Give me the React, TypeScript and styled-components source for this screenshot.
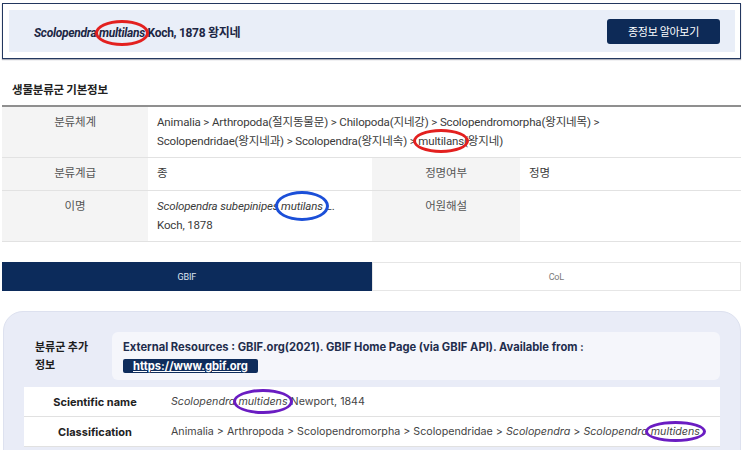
import React from 'react';
import styled, { createGlobalStyle } from 'styled-components';

// Base page styles: no body margin, a sans font stack with Korean fallback.
const GlobalStyle = createGlobalStyle`
  html, body {
    margin: 0;
    padding: 0;
    background: #ffffff;
  }
  body {
    font-family: Roboto, "Noto Sans CJK KR", "Noto Sans", sans-serif;
    color: #333;
  }
  * { box-sizing: border-box; }
`;

const Page = styled.div`
  width: 743px;
  padding: 3px 2px 0 2px;
`;

// Hand-drawn looking ring placed over a word (annotation layer).
const Marked = styled.span<{ $ring: string; $padX: number; $padY: number; $width?: number }>`
  position: relative;
  &::after {
    content: '';
    position: absolute;
    left: -${(p) => p.$padX}px;
    right: -${(p) => p.$padX}px;
    top: -${(p) => p.$padY}px;
    bottom: -${(p) => p.$padY}px;
    border: ${(p) => p.$width ?? 3}px solid ${(p) => p.$ring};
    border-radius: 50%;
    pointer-events: none;
  }
`;

/* ---------- species banner ---------- */

const BannerFrame = styled.div`
  border: 1.5px solid #23375f;
  padding: 6px 5px 6px 6px;
  box-shadow: 0 1px 1px rgba(20, 30, 60, 0.35);
`;

const BannerInner = styled.div`
  height: 42px;
  background: #e9eef8;
  display: flex;
  align-items: center;
  justify-content: space-between;
  padding: 0 15px 0 25px;
`;

const BannerTitle = styled.div`
  font-size: 12px;
  font-weight: 700;
  color: #1c2644;
  letter-spacing: -0.3px;

  em {
    font-style: italic;
  }
`;

const DetailButton = styled.button`
  width: 113px;
  height: 25px;
  border: none;
  border-radius: 3px;
  background: #0d2a57;
  color: #fff;
  font-family: "Noto Sans CJK KR", sans-serif;
  font-size: 11px;
  letter-spacing: -0.3px;
  cursor: pointer;
`;

/* ---------- basic taxonomy table ---------- */

const SectionTitle = styled.h3`
  margin: 22px 0 0 10px;
  height: 26px;
  font-family: "Noto Sans CJK KR", sans-serif;
  font-size: 11.5px;
  font-weight: 700;
  color: #222;
  letter-spacing: -0.2px;
`;

const InfoTable = styled.div`
  display: grid;
  grid-template-columns: 146px 224px 148px 1fr;
  border-top: 2px solid #8f8f8f;
  margin-top: -2px;
`;

const Cell = styled.div<{ $label?: boolean; $span?: number }>`
  grid-column: span ${(p) => p.$span ?? 1};
  padding: 6px 9px 6px;
  line-height: 19px;
  font-size: 11.5px;
  border-bottom: 1px solid #e2e2e2;
  background: ${(p) => (p.$label ? '#f4f4f4' : '#fff')};
  color: ${(p) => (p.$label ? '#555' : '#3a3a3a')};
  text-align: ${(p) => (p.$label ? 'center' : 'left')};
  letter-spacing: -0.15px;
  min-height: 51px;

  &.short {
    min-height: 33px;
  }

  em {
    font-style: italic;
  }
`;

/* ---------- source tabs ---------- */

const Tabs = styled.div`
  display: flex;
  margin-top: 20px;
`;

const Tab = styled.div<{ $active?: boolean }>`
  flex: 1;
  height: 29px;
  display: flex;
  align-items: center;
  justify-content: center;
  font-size: 9px;
  letter-spacing: -0.2px;
  background: ${(p) => (p.$active ? '#0c2b5b' : '#fff')};
  color: ${(p) => (p.$active ? '#dfe6f2' : '#7a7a7a')};
  border: 1px solid ${(p) => (p.$active ? '#0c2b5b' : '#e6e6e6')};
`;

/* ---------- GBIF extra panel ---------- */

const ExtraPanel = styled.div`
  margin-top: 20px;
  margin-left: 1px;
  background: #e9ecf7;
  border: 1px solid #dde1ef;
  border-radius: 20px 20px 0 0;
  padding: 20px 20px 0 20px;
  height: 140px;
  font-family: Inter, "Noto Sans CJK KR", sans-serif;
`;

const ExtraHead = styled.div`
  display: flex;
  align-items: stretch;
`;

const ExtraLabel = styled.div`
  width: 88px;
  padding: 5px 0 0 11px;
  font-size: 11px;
  font-weight: 700;
  line-height: 18px;
  color: #1d1d1d;
  font-family: "Noto Sans CJK KR", sans-serif;
`;

const ExtraBox = styled.div`
  flex: 1;
  background: #f5f6fb;
  border-radius: 6px;
  padding: 8px 11px 7px;
  height: 48px;
`;

const ResourceText = styled.div`
  font-size: 11.2px;
  font-weight: 700;
  color: #1f2d4d;
  line-height: 14px;
`;

const LinkPill = styled.a`
  display: inline-block;
  margin-top: 4px;
  padding: 0 10px;
  height: 14px;
  line-height: 14px;
  border-radius: 2px;
  background: #0f2d5c;
  color: #fff;
  font-size: 11.2px;
  font-weight: 700;
  text-decoration: underline;
`;

const GbifTable = styled.div`
  margin-top: 7px;
  background: #fff;
  display: grid;
  grid-template-columns: 142px 1fr;
`;

const GbifLabel = styled.div`
  height: 30px;
  display: flex;
  align-items: center;
  justify-content: center;
  font-size: 11px;
  font-weight: 700;
  color: #222;
  border-bottom: 1px solid #e1e1e1;
`;

const GbifValue = styled.div`
  height: 30px;
  display: flex;
  align-items: center;
  padding-left: 5px;
  font-size: 10.7px;
  color: #444;
  white-space: nowrap;
  border-bottom: 1px solid #e1e1e1;

  em {
    font-style: italic;
  }
`;

const App: React.FC = () => {
  return (
    <>
      <GlobalStyle />
      <Page>
        <BannerFrame>
          <BannerInner>
            <BannerTitle>
              <em>Scolopendra </em>
              <em>
                <Marked $ring="#e3201f" $padX={4} $padY={6}>multilans</Marked>
              </em>{' '}
              Koch, 1878 왕지네
            </BannerTitle>
            <DetailButton>종정보 알아보기</DetailButton>
          </BannerInner>
        </BannerFrame>

        <SectionTitle>생물분류군 기본정보</SectionTitle>
        <InfoTable>
          <Cell $label>분류체계</Cell>
          <Cell $span={3}>
            Animalia &gt; Arthropoda(절지동물문) &gt; Chilopoda(지네강) &gt; Scolopendromorpha(왕지네목) &gt;
            <br />
            Scolopendridae(왕지네과) &gt; Scolopendra(왕지네속) &gt;{' '}
            <Marked $ring="#e3201f" $padX={5} $padY={5}>multilans</Marked>(왕지네)
          </Cell>

          <Cell $label className="short">분류계급</Cell>
          <Cell className="short">종</Cell>
          <Cell $label className="short">정명여부</Cell>
          <Cell className="short">정명</Cell>

          <Cell $label>이명</Cell>
          <Cell>
            <em>
              Scolopendra subepinipes{' '}
              <Marked $ring="#1b4fd8" $padX={6} $padY={8} $width={3.5}>mutilans</Marked>
            </em>{' '}
            L.
            <br />
            Koch, 1878
          </Cell>
          <Cell $label>어원해설</Cell>
          <Cell />
        </InfoTable>

        <Tabs>
          <Tab $active>GBIF</Tab>
          <Tab>CoL</Tab>
        </Tabs>

        <ExtraPanel>
          <ExtraHead>
            <ExtraLabel>
              분류군 추가
              <br />
              정보
            </ExtraLabel>
            <ExtraBox>
              <ResourceText>
                External Resources : GBIF.org(2021). GBIF Home Page (via GBIF API). Available from :
              </ResourceText>
              <LinkPill href="#">https://www.gbif.org</LinkPill>
            </ExtraBox>
          </ExtraHead>
          <GbifTable>
            <GbifLabel>Scientific name</GbifLabel>
            <GbifValue>
              <em>
                Scolopendra{' '}
                <Marked $ring="#6a1cc2" $padX={5} $padY={6}>multidens</Marked>
              </em>
              &nbsp;Newport, 1844
            </GbifValue>
            <GbifLabel>Classification</GbifLabel>
            <GbifValue>
              Animalia &gt; Arthropoda &gt; Scolopendromorpha &gt; Scolopendridae &gt;&nbsp;
              <em>Scolopendra</em>&nbsp;&gt;&nbsp;
              <em>
                Scolopendra{' '}
                <Marked $ring="#6a1cc2" $padX={6} $padY={4}>multidens</Marked>
              </em>
            </GbifValue>
          </GbifTable>
        </ExtraPanel>
      </Page>
    </>
  );
};

export default App;
